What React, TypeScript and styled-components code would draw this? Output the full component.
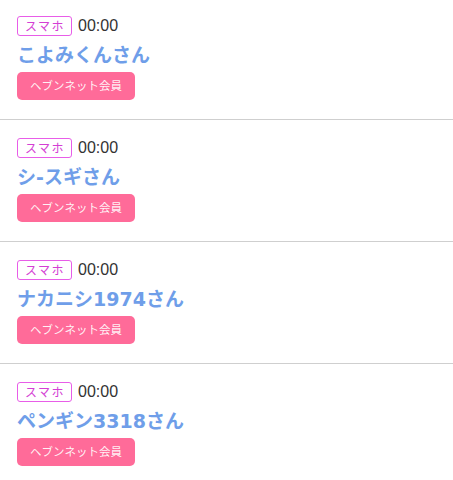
import React from "react"
import styled, { createGlobalStyle } from "styled-components"

interface Member {
  device: string
  time: string
  name: string
  label: string
}

const members: Member[] = [
  { device: "スマホ", time: "00:00", name: "こよみくんさん", label: "ヘブンネット会員" },
  { device: "スマホ", time: "00:00", name: "シ-スギさん", label: "ヘブンネット会員" },
  { device: "スマホ", time: "00:00", name: "ナカニシ1974さん", label: "ヘブンネット会員" },
  { device: "スマホ", time: "00:00", name: "ペンギン3318さん", label: "ヘブンネット会員" },
]

const GlobalStyle = createGlobalStyle`
  body {
    margin: 0;
    background: #fff;
    font-family: "Noto Sans CJK JP", "Noto Sans", sans-serif;
  }
`

const App = () => {
  return (
    <>
      <GlobalStyle />
      <StyledList>
        {members.map((m, i) => (
          <StyledItem key={i}>
            <div className="meta">
              <span className="device">{m.device}</span>
              <span className="time">{m.time}</span>
            </div>
            <div className="name">{m.name}</div>
            <span className="member-label">{m.label}</span>
          </StyledItem>
        ))}
      </StyledList>
    </>
  )
}

const StyledList = styled.ul`
  list-style: none;
  margin: 0;
  padding: 0;
  width: 453px;
`

const StyledItem = styled.li`
  display: flex;
  flex-direction: column;
  align-items: flex-start;
  height: 122px;
  padding: 18px 17px 0;
  box-sizing: border-box;
  border-bottom: 1px solid #cfcfcf;

  &:first-child {
    height: 120px;
    padding-top: 16px;
  }

  .meta {
    display: flex;
    align-items: center;
    gap: 6px;
    height: 20px;
  }

  .device {
    display: inline-flex;
    align-items: center;
    justify-content: center;
    box-sizing: border-box;
    width: 55px;
    height: 20px;
    border: 1px solid #e85de8;
    border-radius: 3px;
    color: #d43fd4;
    font-size: 12px;
    letter-spacing: 1.5px;
    padding-left: 1px;
    line-height: 1;
  }

  .time {
    color: #333;
    font-family: "Liberation Sans", "Noto Sans CJK JP", sans-serif;
    font-size: 16px;
    line-height: 1;
  }

  .name {
    margin-top: 6px;
    color: #6f9ee9;
    font-family: "DejaVu Sans", "Noto Sans CJK JP", sans-serif;
    font-size: 19px;
    font-weight: 700;
    line-height: 26px;
  }

  .member-label {
    margin-top: 4px;
    display: inline-flex;
    align-items: center;
    justify-content: center;
    box-sizing: border-box;
    height: 28px;
    width: 118px;
    border-radius: 5px;
    background: #ff6b99;
    color: rgba(255, 255, 255, 0.92);
    font-size: 11.5px;
    line-height: 1;
    white-space: nowrap;
  }
`

export default App
